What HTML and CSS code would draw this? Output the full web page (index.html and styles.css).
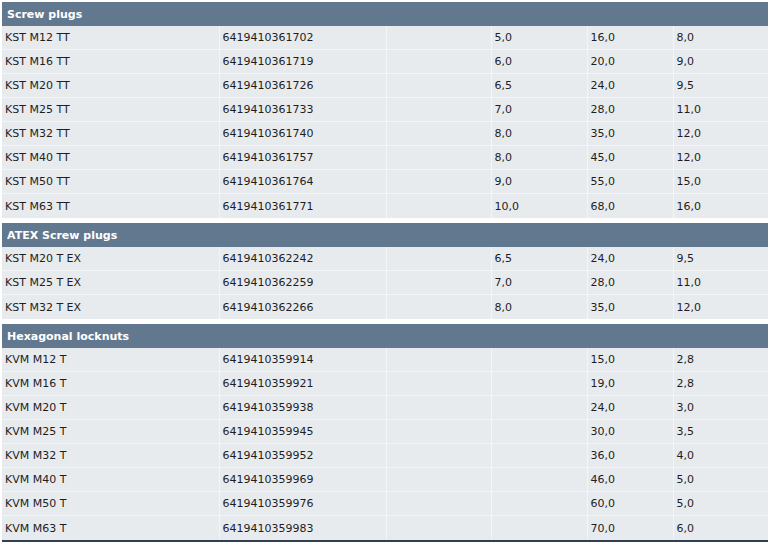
FILE: index.html
```html
<!DOCTYPE html>
<html>
<head>
<meta charset="utf-8">
<link rel="stylesheet" href="styles.css">
</head>
<body>
<div class="wrap">
  <table class="grp">
    <colgroup><col class="c1"><col class="c2"><col class="c3"><col class="c4"><col class="c5"><col class="c6"></colgroup>
    <thead><tr><th colspan="6">Screw plugs</th></tr></thead>
    <tbody>
      <tr><td>KST M12 TT</td><td>6419410361702</td><td></td><td>5,0</td><td>16,0</td><td>8,0</td></tr>
      <tr><td>KST M16 TT</td><td>6419410361719</td><td></td><td>6,0</td><td>20,0</td><td>9,0</td></tr>
      <tr><td>KST M20 TT</td><td>6419410361726</td><td></td><td>6,5</td><td>24,0</td><td>9,5</td></tr>
      <tr><td>KST M25 TT</td><td>6419410361733</td><td></td><td>7,0</td><td>28,0</td><td>11,0</td></tr>
      <tr><td>KST M32 TT</td><td>6419410361740</td><td></td><td>8,0</td><td>35,0</td><td>12,0</td></tr>
      <tr><td>KST M40 TT</td><td>6419410361757</td><td></td><td>8,0</td><td>45,0</td><td>12,0</td></tr>
      <tr><td>KST M50 TT</td><td>6419410361764</td><td></td><td>9,0</td><td>55,0</td><td>15,0</td></tr>
      <tr><td>KST M63 TT</td><td>6419410361771</td><td></td><td>10,0</td><td>68,0</td><td>16,0</td></tr>
    </tbody>
  </table>
  <table class="grp">
    <colgroup><col class="c1"><col class="c2"><col class="c3"><col class="c4"><col class="c5"><col class="c6"></colgroup>
    <thead><tr><th colspan="6">ATEX Screw plugs</th></tr></thead>
    <tbody>
      <tr><td>KST M20 T EX</td><td>6419410362242</td><td></td><td>6,5</td><td>24,0</td><td>9,5</td></tr>
      <tr><td>KST M25 T EX</td><td>6419410362259</td><td></td><td>7,0</td><td>28,0</td><td>11,0</td></tr>
      <tr><td>KST M32 T EX</td><td>6419410362266</td><td></td><td>8,0</td><td>35,0</td><td>12,0</td></tr>
    </tbody>
  </table>
  <table class="grp last">
    <colgroup><col class="c1"><col class="c2"><col class="c3"><col class="c4"><col class="c5"><col class="c6"></colgroup>
    <thead><tr><th colspan="6">Hexagonal locknuts</th></tr></thead>
    <tbody>
      <tr><td>KVM M12 T</td><td>6419410359914</td><td></td><td></td><td>15,0</td><td>2,8</td></tr>
      <tr><td>KVM M16 T</td><td>6419410359921</td><td></td><td></td><td>19,0</td><td>2,8</td></tr>
      <tr><td>KVM M20 T</td><td>6419410359938</td><td></td><td></td><td>24,0</td><td>3,0</td></tr>
      <tr><td>KVM M25 T</td><td>6419410359945</td><td></td><td></td><td>30,0</td><td>3,5</td></tr>
      <tr><td>KVM M32 T</td><td>6419410359952</td><td></td><td></td><td>36,0</td><td>4,0</td></tr>
      <tr><td>KVM M40 T</td><td>6419410359969</td><td></td><td></td><td>46,0</td><td>5,0</td></tr>
      <tr><td>KVM M50 T</td><td>6419410359976</td><td></td><td></td><td>60,0</td><td>5,0</td></tr>
      <tr><td>KVM M63 T</td><td>6419410359983</td><td></td><td></td><td>70,0</td><td>6,0</td></tr>
    </tbody>
  </table>
  <div class="bottom"></div>
</div>
</body>
</html>
```

FILE: styles.css
```css
html, body {
  margin: 0;
  padding: 0;
  background: #ffffff;
}
body {
  font-family: "DejaVu Sans", Verdana, sans-serif;
  font-size: 11px;
  color: #1e1e1e;
}
.wrap {
  width: 766px;
  padding: 2px 2px 0 2px;
  display: flex;
  flex-direction: column;
  gap: 5px;
}
.wrap .last {
  margin-bottom: -5px;
}
.grp {
  width: 766px;
  table-layout: fixed;
  border-collapse: collapse;
  border-spacing: 0;
}
.c1 { width: 217px; }
.c2 { width: 167px; }
.c3 { width: 105px; }
.c4 { width: 96px; }
.c5 { width: 86px; }
.c6 { width: 95px; }
.grp th {
  height: 24px;
  padding: 1px 0 0 5px;
  box-sizing: border-box;
  background: #62788f;
  color: #ffffff;
  font-weight: bold;
  text-align: left;
  white-space: nowrap;
}
.grp td {
  height: 22px;
  padding: 1px 0 0 3px;
  box-sizing: content-box;
  background: #e8ebee;
  border-bottom: 1px solid #f3f5f7;
  border-right: 1px solid #f3f5f7;
  white-space: nowrap;
  overflow: hidden;
  line-height: 22px;
}
.grp td:last-child {
  border-right: none;
}
.grp tr:last-child td {
  border-bottom: none;
  height: 23px;
  line-height: 23px;
}
.bottom {
  height: 2px;
  background: #2e3f56;
}
```
